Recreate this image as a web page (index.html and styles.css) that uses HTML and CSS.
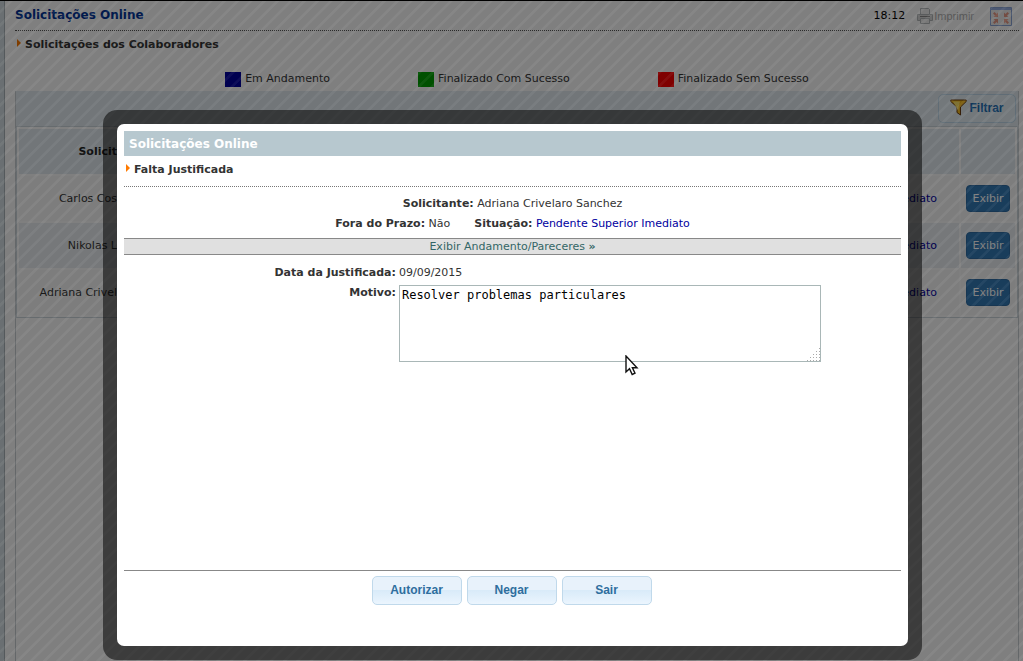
FILE: index.html
```
<!DOCTYPE html>
<html lang="pt-BR">
<head>
<meta charset="utf-8">
<title>Solicitações Online</title>
<link rel="stylesheet" href="styles.css">
</head>
<body>
<div class="page">
  <div class="rail"></div>
  <main class="content">
    <header class="topbar">
      <h1 class="page-title">Solicitações Online</h1>
      <div class="tools">
        <span class="clock">18:12</span>
        <a class="print" href="#">
          <svg width="16" height="16" viewBox="0 0 16 16" fill="none" stroke="#b4b8ba"><path d="M3.5 7V.5h8l1 1V7" fill="#f0f0f0"/><path d="M.5 6.500h15v6H.5z" fill="#d8d8d8"/><path d="M3 8.500h10" stroke="#888"/><path d="M3.500 10.500h9v5h-9z" fill="#eee"/></svg>
          Imprimir</a>
        <svg class="window-icon" width="22" height="19" viewBox="0 0 22 19"><path d="M.5.5h21v18H.5z" fill="#f1f1f1" stroke="#8aa5d6"/><path d="M1 1h20v2H1z" fill="#9ab2e6"/><g fill="#e99a86"><path d="M8 10V5.500L6.500 7 4.500 5 3 6.500 5 8.500 3.500 10zM14 10V5.500L15.500 7l2-2L19 6.500l-2 2 1.500 1.500zM8 12v4.500L6.500 15l-2 2L3 15.500l2-2L3.500 12zM14 12v4.500l1.500-1.500 2 2 1.500-1.500-2-2 1.500-1.500z"/></g></svg>
      </div>
    </header>
    <h2 class="section-title">Solicitações dos Colaboradores</h2>
    <ul class="legend">
      <li><span class="swatch running"></span>Em Andamento</li>
      <li><span class="swatch success"></span>Finalizado Com Sucesso</li>
      <li><span class="swatch failure"></span>Finalizado Sem Sucesso</li>
    </ul>
    <section class="panel">
      <div class="toolbar">
        <button class="btn filter" type="button">
          <svg width="17" height="17" viewBox="0 0 17 17"><path d="M.8 1h15.400v1.500L10.500 8v8L7 13.500V8L.8 2.500z" fill="#f5b81c" stroke="#6b3d10"/><path d="M3 2.500h7L8.500 8v4z" fill="#ffe46a"/></svg>
          Filtrar</button>
      </div>
      <table class="requests">
        <colgroup><col class="col-name"><col><col class="col-status"><col class="col-action"></colgroup>
        <thead><tr><th class="name">Solicit</th><th></th><th></th><th></th></tr></thead>
        <tbody>
          <tr><td class="name">Carlos Cos</td><td></td><td class="status">Pendente Superior Imediato</td><td><button class="show" type="button">Exibir</button></td></tr>
          <tr><td class="name">Nikolas L</td><td></td><td class="status">Pendente Superior Imediato</td><td><button class="show" type="button">Exibir</button></td></tr>
          <tr><td class="name">Adriana Crivel</td><td></td><td class="status">Pendente Superior Imediato</td><td><button class="show" type="button">Exibir</button></td></tr>
        </tbody>
      </table>
    </section>
  </main>
</div>
<div class="overlay"></div>
<div class="frame">
  <form class="dialog" role="dialog" aria-labelledby="dialog-title">
    <h2 class="dialog-title" id="dialog-title">Solicitações Online</h2>
    <h3 class="section-title dialog-section">Falta Justificada</h3>
    <div class="summary">
      <div><b>Solicitante:</b> Adriana Crivelaro Sanchez</div>
      <div class="pair"><span><b>Fora do Prazo:</b> Não</span><span><b>Situação:</b> <span class="status">Pendente Superior Imediato</span></span></div>
    </div>
    <a class="expand" href="#">Exibir Andamento/Pareceres <b>»</b></a>
    <div class="fields">
      <b>Data da Justificada:</b><span>09/09/2015</span>
      <label for="motivo">Motivo:</label>
      <textarea id="motivo" spellcheck="false">Resolver problemas particulares</textarea>
    </div>
    <div class="actions">
      <button class="btn" type="button">Autorizar</button>
      <button class="btn" type="button">Negar</button>
      <button class="btn" type="button">Sair</button>
    </div>
  </form>
</div>
<svg class="cursor" width="14" height="21" viewBox="0 0 14 21"><path d="M1 1v16l3.500-3.300L7.200 19.500l2.800-1.300-2.600-5.500H12z" fill="#fff" stroke="#111" stroke-width="1.400"/></svg>
</body>
</html>
```

FILE: styles.css
```
* { box-sizing: border-box; }

body {
  margin: 0;
  font: 11px/20px "DejaVu Sans", Verdana, sans-serif;
  color: #333;
  background: #fff;
}

h1, h2, h3, ul { margin: 0; padding: 0; font-size: 11px; }
button, textarea { margin: 0; }

.page {
  display: flex;
  min-height: 100vh;
  border-top: 1px solid #000;
}

.rail {
  width: 5px;
  background: #d5dfe4;
  border-right: 1px solid #a9b3b8;
}

.content {
  flex: 1;
  display: flex;
  flex-direction: column;
  padding: 0 4px 0 10px;
}

.topbar {
  display: flex;
  justify-content: space-between;
  height: 30px;
  padding: 3px 7px 0 0;
  border-bottom: 1px dotted #555;
}

.page-title { font-size: 12px; line-height: 22px; color: #003399; }
.tools { display: flex; align-items: center; height: 24px; }
.clock { color: #000; margin-right: 12px; }

.print {
  display: flex;
  align-items: center;
  gap: 1px;
  margin-right: 16px;
  font-family: "Liberation Sans", Arial, sans-serif;
  color: #b0b0b0;
  text-decoration: none;
}

.section-title {
  display: flex;
  align-items: center;
  gap: 4px;
  padding-left: 2px;
  line-height: 28px;
}

.section-title::before {
  content: "";
  border-left: 4px solid #ff7a00;
  border-top: 4px solid transparent;
  border-bottom: 4px solid transparent;
  margin-bottom: 4px;
}

.legend {
  display: flex;
  justify-content: center;
  gap: 88px;
  padding: 10px 0 2px;
  list-style: none;
}

.legend li { display: flex; align-items: center; gap: 4px; }
.swatch { width: 16px; height: 15px; }
.running { background: #0000a0; }
.success { background: #00a000; }
.failure { background: #ff0000; }

.panel {
  flex: 1;
  border: solid #c9cfd3;
  border-width: 0 1px;
}

.toolbar {
  display: flex;
  justify-content: flex-end;
  padding: 3px 2px;
  background: #e4edf2;
}

.btn {
  width: 90px;
  height: 29px;
  padding: 0 0 2px;
  border: 1px solid #c0d9eb;
  border-radius: 5px;
  background: linear-gradient(#e8f2fb 50%, #d9ebf9 50%, #ebf5fe);
  font: bold 12px "Liberation Sans", Arial, sans-serif;
  color: #2e6e9e;
}

.filter {
  display: flex;
  align-items: center;
  justify-content: center;
  gap: 2px;
  width: 78px;
  background: #e6f0f6;
  color: #1d6fb5;
}

.requests {
  width: 100%;
  border: 1px solid #ccd6dc;
  border-spacing: 2px;
  table-layout: fixed;
  text-align: center;
  background: #fff;
}

.requests th, .requests td { height: 45px; padding: 0; }
.requests th { background: #e4edf2; color: #222; }
.requests tbody tr:nth-child(even) td { background: #edf1f4; }
.requests tbody tr:nth-child(odd) td { background: #fafafa; }
.requests .name { text-align: right; white-space: nowrap; }
.col-name { width: 98px; }
.col-status { width: 198px; }
.col-action { width: 54px; }
.status { color: #0000a0; }

.show {
  width: 44px;
  height: 27px;
  padding: 0;
  border: 1px solid #2e6da4;
  border-radius: 4px;
  background: #337ab7;
  font: 11px "DejaVu Sans", Verdana, sans-serif;
  color: #fff;
}

.overlay {
  position: fixed;
  inset: 1px 0 0;
  background-color: rgba(0, 0, 0, 0.5);
  background-image: repeating-linear-gradient(135deg, transparent 0 11%, rgba(255, 255, 255, 0.05) 12% 15.67%, transparent 16.67%);
  background-size: 40px 40px;
}

.frame {
  position: fixed;
  inset: 110px 101px 1px 103px;
  padding: 14px;
  border-radius: 14px;
  background: rgba(0, 0, 0, 0.53);
}

.dialog {
  display: flex;
  flex-direction: column;
  height: 100%;
  padding: 7px;
  border-radius: 7px;
  background: #fff;
}

.dialog-title {
  padding: 1px 0 0 5px;
  font-size: 12px;
  line-height: 24px;
  background: #b7c8cf;
  color: #fff;
}

.dialog-section {
  height: 31px;
  padding-bottom: 3px;
  border-bottom: 1px dotted #777;
}

.summary { padding: 7px 0 4px; text-align: center; }
.pair { display: flex; justify-content: center; gap: 24px; }

.expand {
  padding-top: 1px;
  border: solid #888;
  border-width: 1px 0;
  background: #e0e0e0;
  line-height: 14px;
  text-align: center;
  color: #336666;
  text-decoration: none;
}

.fields {
  display: grid;
  grid-template-columns: 35% 1fr;
  column-gap: 3px;
  padding-top: 8px;
  align-items: start;
}

.fields b, .fields label { font-weight: bold; text-align: right; }

textarea {
  width: 422px;
  height: 77px;
  margin-top: 2px;
  padding: 2px;
  border: 1px solid #a9b7b7;
  font: 12px/15px "DejaVu Sans Mono", monospace;
  color: #000;
}

textarea::-webkit-resizer {
  background:
    linear-gradient(135deg, #fff 55%, transparent 55%),
    conic-gradient(from 90deg at 2px 2px, transparent 25%, #fff 0) 0 0 / 3px 3px,
    #aaa;
}

.actions {
  display: flex;
  justify-content: center;
  gap: 5px;
  margin-top: auto;
  padding: 5px 2px 34px 0;
  border-top: 1px solid #888;
}

.cursor { position: fixed; left: 625px; top: 355px; }
```
